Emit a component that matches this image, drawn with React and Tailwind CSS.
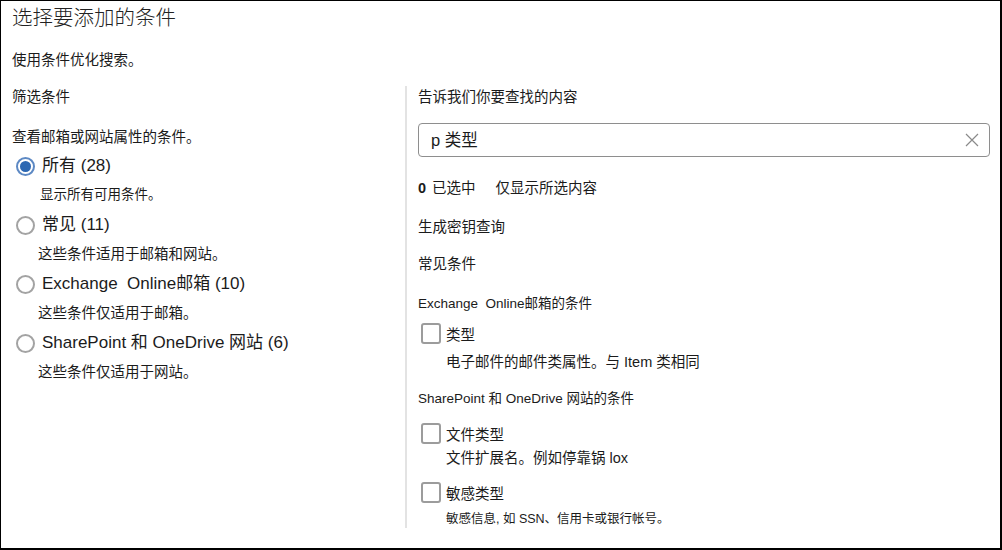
import React from 'react';

const font = { fontFamily: '"Liberation Sans", "Noto Sans CJK SC", sans-serif' };

const options = [
  { label: '所有 (28)', desc: '显示所有可用条件。', checked: true, small: true },
  { label: '常见 (11)', desc: '这些条件适用于邮箱和网站。' },
  { label: 'Exchange  Online邮箱 (10)', desc: '这些条件仅适用于邮箱。' },
  { label: 'SharePoint 和 OneDrive 网站 (6)', desc: '这些条件仅适用于网站。' },
];

const Radio = ({ checked }) =>
  checked ? (
    <div className="h-[19px] w-[19px] rounded-full border-2 border-[#5d89c4] flex items-center justify-center shrink-0">
      <div className="h-[11px] w-[11px] rounded-full bg-[#2c67b2]" />
    </div>
  ) : (
    <div className="h-[19px] w-[19px] rounded-full border-2 border-[#a3a3a3] shrink-0" />
  );

const Checkbox = () => (
  <div className="h-[21px] w-[20px] rounded-[3px] border-2 border-[#9c9c9c] shrink-0" />
);

const CheckItem = ({ label, desc, descClass = 'text-[14.5px] leading-5', gap = 'mt-[6px]' }) => (
  <div>
    <div className="flex items-center h-[21px] pl-[3px]">
      <Checkbox />
      <span className="ml-[5px] text-[14.5px] leading-5 pt-[3px]">{label}</span>
    </div>
    <div className={`${gap} pl-[28px] ${descClass}`}>{desc}</div>
  </div>
);

export default function App() {
  return (
    <div
      className="w-[1002px] h-[550px] bg-white text-[#1b1b1b] border-t border-l border-r-2 border-b-2 border-black flex flex-col"
      style={font}
    >
      {/* header */}
      <div className="pl-[11px] pt-[3px]">
        <div className="text-[20.5px] leading-7 font-light text-[#222]">选择要添加的条件</div>
        <p className="mt-[18px] text-[14.5px] leading-5">使用条件优化搜索。</p>
      </div>

      <div className="flex flex-1 mt-[16px]">
        {/* left column */}
        <div className="w-[404px] pl-[11px] pt-[1px]">
          <div className="text-[14.5px] leading-5">筛选条件</div>
          <div className="mt-[20px] text-[14.5px] leading-5">查看邮箱或网站属性的条件。</div>
          <div className="mt-[7px]">
            {options.map((o) => (
              <div key={o.label} className="mb-[8px]">
                <div className="flex items-center h-6 pl-[4px]">
                  <Radio checked={o.checked} />
                  <span className="ml-[7px] text-[17px] leading-6 whitespace-pre">{o.label}</span>
                </div>
                <div
                  className={`mt-[7px] leading-5 ${o.small ? 'text-[13.5px] pl-[28px]' : 'text-[14.5px] pl-[26px]'}`}
                >
                  {o.desc}
                </div>
              </div>
            ))}
          </div>
        </div>

        {/* right column */}
        <div className="flex-1 border-l-2 border-[#e3e3e3] pl-[11px] pr-[10px] mb-[23px]">
          <div className="mt-[1px] text-[14.5px] leading-5">告诉我们你要查找的内容</div>
          <div className="mt-[16px] h-[34px] rounded-[4px] border border-[#8e8e8e] flex items-center pl-[12px] pr-[10px]">
            <span className="flex-1 text-[16.5px] leading-6">p 类型</span>
            <svg width="14" height="14" viewBox="0 0 14 14" className="text-[#8a8a8a]">
              <path d="M1 1L13 13M13 1L1 13" stroke="currentColor" strokeWidth="1.2" fill="none" />
            </svg>
          </div>
          <div className="mt-[21px] text-[14.5px] leading-5 flex">
            <span className="font-bold">0</span>
            <span className="ml-[6px]">已选中</span>
            <span className="ml-[20px]">仅显示所选内容</span>
          </div>
          <div className="mt-[19px] text-[14.5px] leading-5">生成密钥查询</div>
          <div className="mt-[17px] text-[14.5px] leading-5">常见条件</div>
          <div className="mt-[20px] text-[13.5px] leading-5 whitespace-pre">Exchange  Online邮箱的条件</div>
          <div className="mt-[9px]">
            <CheckItem label="类型" desc="电子邮件的邮件类属性。与 Item 类相同" gap="mt-[8px]" />
          </div>
          <div className="mt-[17px] text-[13.5px] leading-5">SharePoint 和 OneDrive 网站的条件</div>
          <div className="mt-[14px]">
            <CheckItem label="文件类型" desc="文件扩展名。例如停靠锅 lox" gap="mt-[4px]" />
          </div>
          <div className="mt-[14px]">
            <CheckItem
              label="敏感类型"
              desc="敏感信息, 如 SSN、信用卡或银行帐号。"
              descClass="text-[12.5px] leading-[18px]"
              gap="mt-[7px]"
            />
          </div>
        </div>
      </div>
    </div>
  );
}
